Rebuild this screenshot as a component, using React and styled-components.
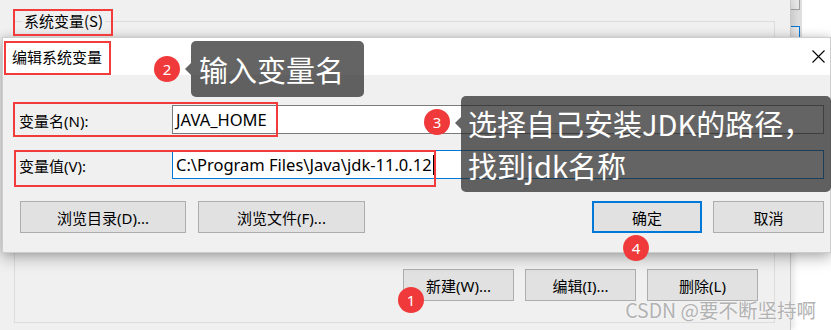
import React from "react";
import styled, { createGlobalStyle } from "styled-components";

const Global = createGlobalStyle`
  html, body { margin: 0; padding: 0; background: #f0f0f0; }
  body { font-family: "Noto Sans", "Noto Sans CJK SC", sans-serif; }
  * { box-sizing: border-box; }
`;

const UI_FONT = `"Noto Sans", "Noto Sans CJK SC", sans-serif`;
const CJK_FONT = `"Noto Sans CJK SC", "Noto Sans", sans-serif`;

const Stage = styled.div`
  position: relative;
  width: 831px;
  height: 330px;
  overflow: hidden;
  display: flex;
  background: #fff;
  font-family: ${UI_FONT};
  color: #000;
`;

/* ---------- window behind the dialog ---------- */
const BackWindow = styled.div`
  flex: none;
  width: 790px;
  height: 330px;
  background: #f0f0f0;
  padding: 11px 15px 7px 14px;
  box-shadow: 1px 0 0 #c9c9c9, 4px 0 6px rgba(0, 0, 0, 0.1);
  display: flex;
  position: relative;
  z-index: 1;
`;

const GroupBox = styled.fieldset`
  margin: 0;
  padding: 0 16px 21px 0;
  min-width: 0;
  flex: 1;
  border: 1px solid #dcdcdc;
  display: flex;
  flex-direction: column;
  justify-content: flex-end;
`;

const Legend = styled.legend`
  margin-left: 7px;
  padding: 0 2px;
  font-family: ${CJK_FONT};
  font-size: 15px;
  line-height: 20px;
`;

const RightPane = styled.div`
  flex: 1;
  background: #fff;
  display: flex;
`;

const Strip = styled.div`
  width: 12px;
  height: 40px;
  background: #dedede;
  display: flex;
  flex-direction: column;
  gap: 16px;
`;

const StripCell = styled.div`
  width: 10px;
  height: ${(p) => p.$h}px;
  border-right: 1px solid ${(p) => p.$c};
  border-${(p) => p.$edge}: 1px solid ${(p) => p.$c};
  background: #e8e8e8;
`;

const ButtonRow = styled.div`
  display: flex;
  justify-content: ${(p) => p.$justify || "flex-end"};
  gap: ${(p) => p.$gap || 11}px;
`;

const ButtonGroup = styled.div`
  display: flex;
  gap: ${(p) => p.$gap}px;
  margin-left: ${(p) => p.$indent || 0}px;
`;

const Button = styled.div`
  width: ${(p) => p.$w}px;
  height: 32px;
  background: #e1e1e1;
  border: ${(p) => (p.$primary ? "2px solid #0078d7" : "1px solid #adadad")};
  display: flex;
  align-items: center;
  justify-content: center;
  font-family: ${UI_FONT};
  font-size: 15px;
  color: #000;
`;

/* ---------- the dialog ---------- */
const Dialog = styled.div`
  position: absolute;
  left: 2px;
  top: 37px;
  width: 829px;
  height: 216px;
  z-index: 2;
  background: #f0f0f0;
  border: 1px solid #cdcdcd;
  box-shadow: 0 5px 14px rgba(0, 0, 0, 0.28), 0 0 8px rgba(0, 0, 0, 0.12);
  display: flex;
  flex-direction: column;
`;

const TitleBar = styled.div`
  height: 37px;
  flex: none;
  background: #fff;
  display: flex;
  align-items: center;
  justify-content: space-between;
  padding: 0 5px 0 9px;
`;

const Title = styled.div`
  font-family: ${CJK_FONT};
  font-size: 15px;
  line-height: 20px;
`;

const Body = styled.div`
  flex: 1;
  padding: 30px 6px 19px 16px;
  display: flex;
  flex-direction: column;
`;

const FieldRow = styled.div`
  display: flex;
  align-items: center;
  height: 29px;
  margin-bottom: ${(p) => p.$mb}px;
`;

const Label = styled.div`
  width: 153px;
  flex: none;
  font-size: 15px;
  padding-top: 2px;
`;

const TextBox = styled.div`
  flex: 1;
  height: 29px;
  background: #fff;
  border: 1px solid ${(p) => (p.$focused ? "#0078d7" : "#7a7a7a")};
  display: flex;
  align-items: center;
  padding-left: 3px;
  font-size: 16.5px;
  white-space: nowrap;
`;

const Caret = styled.span`
  display: inline-block;
  width: 1px;
  height: 20px;
  background: #000;
  margin-left: 1px;
`;

/* ---------- annotations ---------- */
const RedBox = styled.div`
  position: absolute;
  z-index: 5;
  left: ${(p) => p.$x}px;
  top: ${(p) => p.$y}px;
  width: ${(p) => p.$w}px;
  height: ${(p) => p.$h}px;
  border: 2px solid #f23b3b;
  pointer-events: none;
`;

const Badge = styled.div`
  position: absolute;
  z-index: 6;
  left: ${(p) => p.$cx - 13}px;
  top: ${(p) => p.$cy - 13}px;
  width: 26px;
  height: 26px;
  border-radius: 50%;
  background: #f0393a;
  color: #fff;
  font-family: ${UI_FONT};
  font-size: 15px;
  display: flex;
  align-items: center;
  justify-content: center;
`;

const Bubble = styled.div`
  position: absolute;
  z-index: 6;
  left: ${(p) => p.$x}px;
  top: ${(p) => p.$y}px;
  width: ${(p) => p.$w}px;
  height: ${(p) => p.$h}px;
  padding: ${(p) => p.$pad};
  background: rgba(40, 40, 40, 0.72);
  border-radius: 5px;
  color: #fff;
  font-family: ${CJK_FONT};
  font-size: 29px;
  line-height: 42px;
  white-space: nowrap;

  &::before {
    content: "";
    position: absolute;
    left: -6px;
    top: ${(p) => p.$arrow}px;
    border-style: solid;
    border-width: 6px 6px 6px 0;
    border-color: transparent rgba(40, 40, 40, 0.72) transparent transparent;
  }
`;

const Watermark = styled.div`
  position: absolute;
  z-index: 7;
  right: 15px;
  bottom: 8px;
  font-family: ${CJK_FONT};
  font-size: 19.5px;
  line-height: 24px;
  color: #b2b2b2;
  text-shadow: 0 0 2px rgba(255, 255, 255, 0.9);
`;

const CloseIcon = () => (
  <svg width="13" height="13" viewBox="0 0 13 13" fill="none">
    <path d="M0.5 0.5L12.5 12.5M12.5 0.5L0.5 12.5" stroke="#000" strokeWidth="1.1" />
  </svg>
);

export default function App() {
  return (
    <>
      <Global />
      <Stage>
        <BackWindow>
          <GroupBox>
            <Legend>系统变量(S)</Legend>
            <ButtonRow $gap={11}>
              <Button $w={111}>新建(W)...</Button>
              <Button $w={111}>编辑(I)...</Button>
              <Button $w={111}>删除(L)</Button>
            </ButtonRow>
          </GroupBox>
        </BackWindow>
        <RightPane>
          <Strip>
            <StripCell $h={10} $c="#9f9f9f" $edge="bottom" />
            <StripCell $h={12} $c="#0078d7" $edge="top" />
          </Strip>
        </RightPane>

        <Dialog>
          <TitleBar>
            <Title>编辑系统变量</Title>
            <CloseIcon />
          </TitleBar>
          <Body>
            <FieldRow $mb={16}>
              <Label>变量名(N):</Label>
              <TextBox>JAVA_HOME</TextBox>
            </FieldRow>
            <FieldRow $mb={22}>
              <Label>变量值(V):</Label>
              <TextBox $focused>
                C:\Program Files\Java\jdk-11.0.12
                <Caret />
              </TextBox>
            </FieldRow>
            <ButtonRow $justify="space-between">
              <ButtonGroup $gap={12} $indent={1}>
                <Button $w={166}>浏览目录(D)...</Button>
                <Button $w={167}>浏览文件(F)...</Button>
              </ButtonGroup>
              <ButtonGroup $gap={11}>
                <Button $w={110} $primary>确定</Button>
                <Button $w={111}>取消</Button>
              </ButtonGroup>
            </ButtonRow>
          </Body>
        </Dialog>

        <RedBox $x={13} $y={9} $w={100} $h={27} />
        <RedBox $x={4} $y={41} $w={107} $h={34} />
        <RedBox $x={13} $y={102} $w={265} $h={35} />
        <RedBox $x={14} $y={150} $w={422} $h={37} />

        <Bubble $x={191} $y={41} $w={173} $h={56} $pad="7px 0 0 8px" $arrow={22}>
          输入变量名
        </Bubble>
        <Badge $cx={167} $cy={69}>2</Badge>

        <Bubble $x={461} $y={96} $w={370} $h={96} $pad="6px 0 0 7px" $arrow={21}>
          选择自己安装JDK的路径，
          <br />
          找到jdk名称
        </Bubble>
        <Badge $cx={437} $cy={122}>3</Badge>

        <Badge $cx={636} $cy={248}>4</Badge>
        <Badge $cx={411} $cy={300}>1</Badge>

        <Watermark>CSDN @要不断坚持啊</Watermark>
      </Stage>
    </>
  );
}
